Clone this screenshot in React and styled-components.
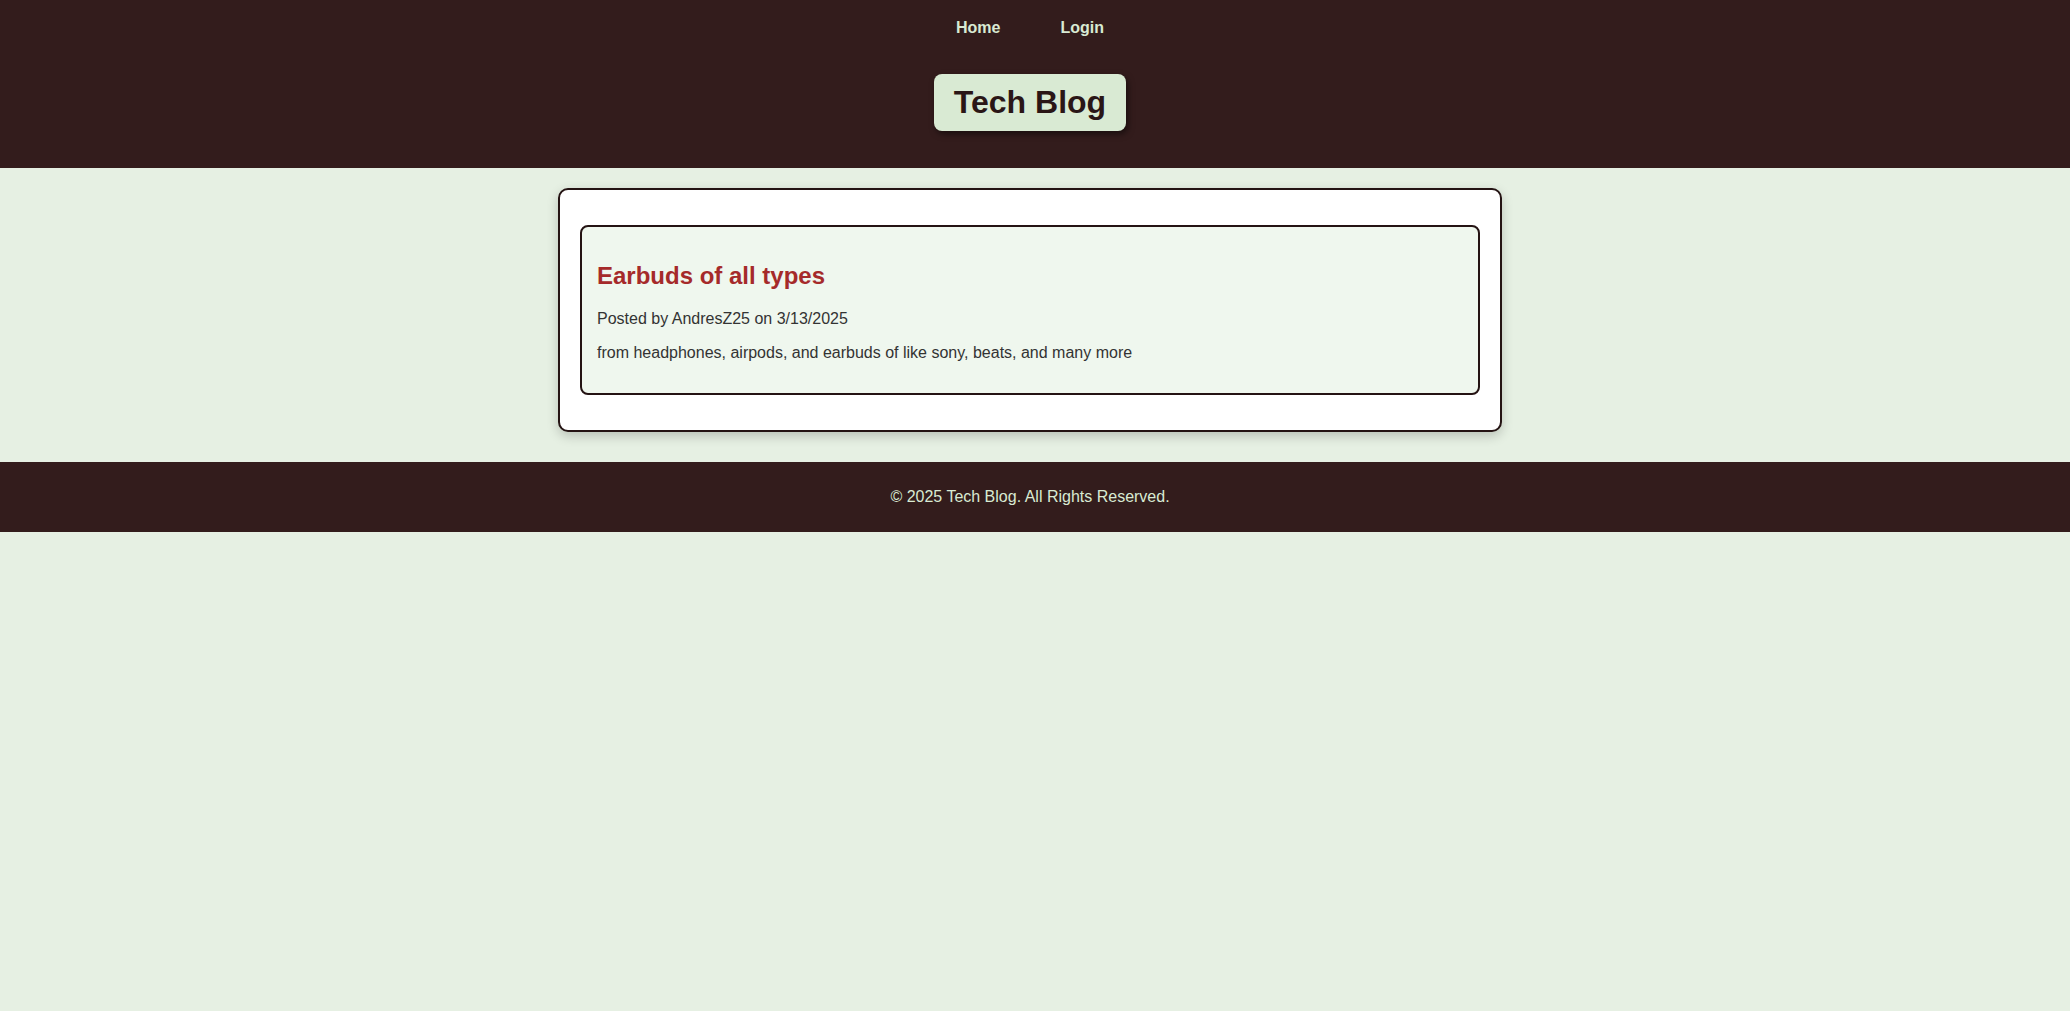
import React from 'react';
import styled, { createGlobalStyle } from 'styled-components';

const GlobalStyle = createGlobalStyle`
  body {
    margin: 0;
    background: #e6f0e3;
    font-family: "Liberation Sans", Arial, sans-serif;
  }
`;

const posts = [
  {
    id: 1,
    title: 'Earbuds of all types',
    author: 'AndresZ25',
    date: '3/13/2025',
    body: 'from headphones, airpods, and earbuds of like sony, beats, and many more',
  },
];

const App = () => {
  return (
    <>
      <GlobalStyle />
      <Header>
        <Nav>
          <NavLink href="#">Home</NavLink>
          <NavLink href="#">Login</NavLink>
        </Nav>
        <Title>Tech Blog</Title>
      </Header>

      <Main>
        <PostList>
          {posts.map((post) => (
            <PostCard key={post.id}>
              <PostTitle>{post.title}</PostTitle>
              <Meta>
                Posted by {post.author} on {post.date}
              </Meta>
              <Body>{post.body}</Body>
            </PostCard>
          ))}
        </PostList>
      </Main>

      <Footer>© 2025 Tech Blog. All Rights Reserved.</Footer>
    </>
  );
};

const Header = styled.header`
  background: #331c1c;
  display: flex;
  flex-direction: column;
  align-items: center;
  padding: 11px 10px 37px 0;
`;

const Nav = styled.nav`
  display: flex;
  gap: 60px;
  padding: 8px 0;
`;

const NavLink = styled.a`
  color: #d9ead3;
  font-weight: bold;
  font-size: 16px;
  text-decoration: none;
`;

const Title = styled.h1`
  margin: 29px 0 0;
  padding: 10px 20px;
  font-size: 32px;
  color: #2a1616;
  background: #d9ead3;
  border-radius: 8px;
  box-shadow: 2px 3px 6px rgba(0, 0, 0, 0.5);
`;

const Main = styled.main`
  display: flex;
  justify-content: center;
  padding: 20px 10px 30px 0;
`;

const PostList = styled.section`
  width: 900px;
  padding: 20px;
  background: #ffffff;
  border: 2px solid #241313;
  border-radius: 10px;
  box-shadow: 0 4px 12px rgba(0, 0, 0, 0.2);
`;

const PostCard = styled.article`
  margin: 15px 0;
  padding: 15px;
  background: #eff7ee;
  border: 2px solid #241313;
  border-radius: 8px;
`;

const PostTitle = styled.h2`
  font-size: 24px;
  margin: 20px 0;
  color: #a52a2a;
`;

const Meta = styled.p`
  font-size: 16px;
  color: #333333;
  margin: 16px 0;
`;

const Body = styled.p`
  font-size: 16px;
  color: #333333;
  margin: 16px 0;
`;

const Footer = styled.footer`
  background: #331c1c;
  color: #d9ead3;
  text-align: center;
  font-size: 16px;
  padding: 26px 10px 26px 0;
`;

export default App;
